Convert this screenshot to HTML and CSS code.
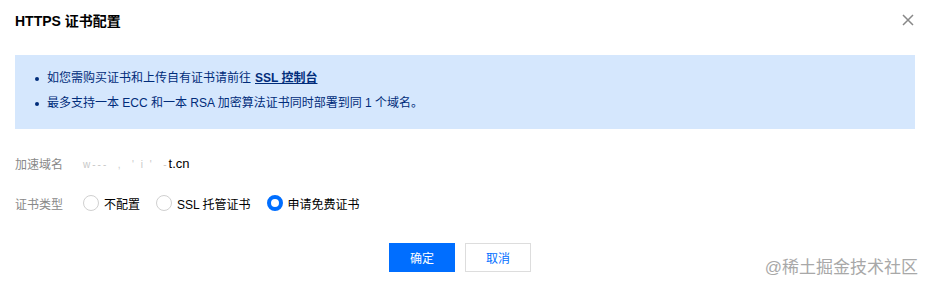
FILE: index.html
```html
<!DOCTYPE html>
<html lang="zh-CN">
<head>
    <meta charset="UTF-8">
    <title>HTTPS 证书配置</title>
    <link rel="stylesheet" href="styles.css">
</head>
<body>
    <div class="dialog">
        <div class="dialog-header">
            <div class="dialog-title">HTTPS 证书配置</div>
            <button class="close-button" aria-label="关闭">
                <svg width="12" height="12" viewBox="0 0 12 12">
                    <path d="M1 1L11 11M11 1L1 11" stroke="#888" stroke-width="1.5" fill="none"/>
                </svg>
            </button>
        </div>

        <div class="notice">
            <ul>
                <li>如您需购买证书和上传自有证书请前往 <a href="#" class="notice-link">SSL 控制台</a></li>
                <li>最多支持一本 ECC 和一本 RSA 加密算法证书同时部署到同 1 个域名。</li>
            </ul>
        </div>

        <div class="form">
            <div class="form-row">
                <div class="form-label">加速域名</div>
                <div class="form-value"><span class="masked">w---  ,  ' i '  -</span>t.cn</div>
            </div>
            <div class="form-row">
                <div class="form-label">证书类型</div>
                <div class="radio-group">
                    <label class="radio"><span class="radio-dot"></span>不配置</label>
                    <label class="radio"><span class="radio-dot"></span>SSL 托管证书</label>
                    <label class="radio checked"><span class="radio-dot"></span>申请免费证书</label>
                </div>
            </div>
        </div>

        <div class="dialog-footer">
            <button class="btn btn-primary">确定</button>
            <button class="btn btn-default">取消</button>
        </div>
    </div>

    <div class="watermark">@稀土掘金技术社区</div>
</body>
</html>
```

FILE: styles.css
```css
body {
    margin: 0;
    background-color: #fff;
    font-family: "Liberation Sans", Arial, "Noto Sans CJK SC", sans-serif;
    font-size: 12px;
    color: #000;
    position: relative;
    height: 284px;
    overflow: hidden;
}

.dialog {
    padding: 0 10px 0 15px;
}

.dialog-header {
    height: 40px;
    display: flex;
    align-items: center;
    justify-content: space-between;
}

.dialog-title {
    font-size: 14px;
    font-weight: bold;
    color: #000;
}

.close-button {
    background: none;
    border: none;
    padding: 0;
    margin-right: 1px;
    width: 12px;
    height: 12px;
    display: flex;
    cursor: pointer;
}

.notice {
    margin-top: 15px;
    background-color: #d5e7fd;
    padding: 11px 20px 13px 20px;
    color: #002c7a;
}

.notice ul {
    margin: 0;
    padding: 0;
    list-style: none;
}

.notice li {
    line-height: 25px;
    display: flex;
    align-items: center;
}

.notice li::before {
    content: "";
    width: 4px;
    height: 4px;
    border-radius: 50%;
    background-color: #002c7a;
    margin-right: 8px;
}

.notice-link {
    color: #002c7a;
    font-weight: bold;
    text-decoration: underline;
    margin-left: 4px;
}

.form {
    margin-top: 19px;
}

.form-row {
    height: 30px;
    display: flex;
    align-items: center;
    margin-bottom: 10px;
}

.form-label {
    width: 68px;
    color: #888;
}

.form-value {
    color: #000;
    font-size: 13px;
    white-space: pre;
}

.masked {
    color: #c8c8c8;
    font-size: 10px;
    letter-spacing: 2px;
}

.radio-group {
    display: flex;
    align-items: center;
}

.radio {
    display: flex;
    align-items: center;
    margin-right: 16px;
    color: #000;
    cursor: pointer;
}

.radio-dot {
    width: 14px;
    height: 14px;
    border: 1px solid #d0d0d0;
    border-radius: 50%;
    margin-right: 5px;
    box-sizing: content-box;
}

.radio.checked .radio-dot {
    width: 8px;
    height: 8px;
    border: 4px solid #006eff;
}

.dialog-footer {
    display: flex;
    justify-content: center;
    gap: 10px;
    margin-top: 25px;
    padding-right: 10px;
}

.btn {
    width: 66px;
    height: 29px;
    font-family: "Liberation Sans", Arial, "Noto Sans CJK SC", sans-serif;
    font-size: 12px;
    border: 1px solid #ddd;
    background-color: #fff;
    color: #006eff;
    cursor: pointer;
    padding: 0;
}

.btn-primary {
    background-color: #006eff;
    border-color: #006eff;
    color: #fff;
}

.watermark {
    position: absolute;
    right: 7px;
    bottom: 6px;
    font-size: 17px;
    color: #a8a8a8;
}
```
